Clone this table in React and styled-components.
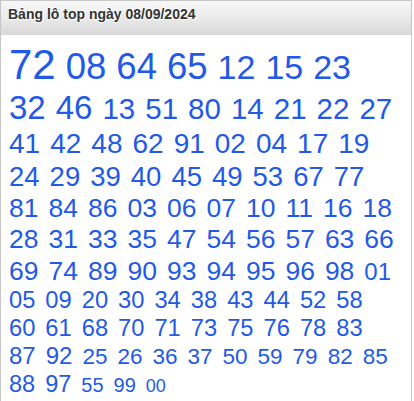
import React from "react";
import styled, { createGlobalStyle } from "styled-components";

const Global = createGlobalStyle`
  html, body { margin: 0; padding: 0; background: #ffffff; }
  body { font-family: "Liberation Sans", Arial, sans-serif; }
`;

const Panel = styled.section`
  width: 412px;
  box-sizing: border-box;
  border: 1px solid #c6c6c6;
  border-bottom: none;
  background: #ffffff;
  min-height: 401px;
`;

const Header = styled.h3`
  margin: 0;
  padding: 4px 7px 12px;
  font-size: 14px;
  line-height: 18px;
  font-weight: bold;
  color: #333333;
  text-shadow: 0 1px 0 #ffffff, 0 -1px 0 #ffffff, 1px 0 0 #ffffff;
  background: linear-gradient(to bottom, #f8f8f8 0%, #ececec 45%, #d8d8d8 100%);
`;

const Cloud = styled.div`
  display: flex;
  flex-wrap: wrap;
  align-items: baseline;
  column-gap: 10px;
  padding: 5px 15.5px 0 8px;
`;

const Num = styled.span`
  font-size: ${(p) => p.$size}px;
  line-height: 1.175;
  color: #225ae6;
`;

const groups = [
  [42, "72"],
  [36.5, "08 64 65"],
  [34, "12 15 23"],
  [33, "32 46"],
  [29.5, "13 51 80 14 21 22 27"],
  [28, "41 42 48 62 91 02 04 17 19"],
  [27.5, "24 29 39 40 45 49 53 67 77"],
  [26.5, "81 84 86 03 06 07 10 11 16 18"],
  [26.5, "28 31 33 35 47 54 56 57 63 66"],
  [26.5, "69 74 89 90 93 94 95 96 98"],
  [24, "01"],
  [23.7, "05 09 20 30 34 38 43 44 52 58"],
  [23.7, "60 61 68 70 71 73 75 76 78 83"],
  [24, "87 92"],
  [22.5, "25 26 36 37 50 59 79 82 85"],
  [23.5, "88 97"],
  [20, "55 99"],
  [18, "00"],
];

const numbers = groups.flatMap(([size, list]) =>
  list.split(" ").map((n) => ({ n, size }))
);

export default function App() {
  return (
    <>
      <Global />
      <Panel>
        <Header>Bảng lô top ngày 08/09/2024</Header>
        <Cloud>
          {numbers.map(({ n, size }) => (
            <Num key={n} $size={size}>
              {n}
            </Num>
          ))}
        </Cloud>
      </Panel>
    </>
  );
}
